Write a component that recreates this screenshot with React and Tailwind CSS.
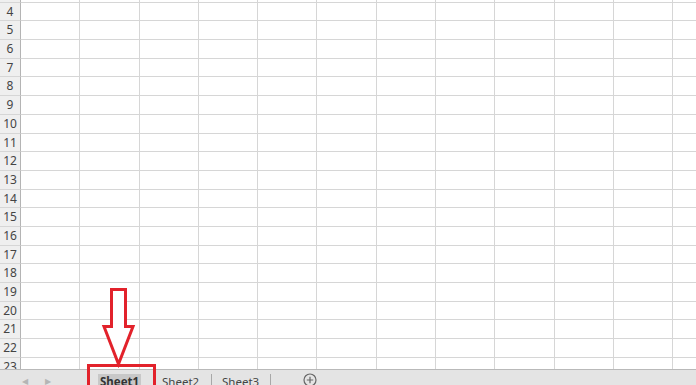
import React from "react";

const rows = Array.from({ length: 21 }, (_, i) => i + 3);
const cols = Array.from({ length: 12 }, (_, i) => i);

const App = () => {
  return (
    <div className="relative w-[696px] h-[385px] overflow-hidden bg-white font-['Noto_Sans',sans-serif]">
      {/* Grid */}
      <div className="h-[370px] overflow-hidden border-b border-[#b9b9b9]">
        <div className="mt-[-16px]">
          {rows.map((r) => (
            <div key={r} className="flex h-[18.7px]">
              <div className="w-[21px] shrink-0 bg-[#efefef] border-r border-b border-r-[#b4b4b4] border-b-[#d6d6d6] text-[12px] leading-[18px] text-[#444] text-center">
                {r}
              </div>
              {cols.map((c) => (
                <div
                  key={c}
                  className="w-[59.3px] shrink-0 border-r border-b border-[#d6d6d6]"
                />
              ))}
            </div>
          ))}
        </div>
      </div>

      {/* Sheet tabs */}
      <div className="h-[15px] bg-[#e4e4e4] flex items-start text-[11.5px] leading-[14px] text-[#444]">
        <div className="w-[87px] flex items-center pt-[4px]">
          <span className="ml-[22px] text-[8px] text-[#b5b5b5]">◀</span>
          <span className="ml-[17px] text-[8px] text-[#b5b5b5]">▶</span>
        </div>
        <div className="w-[69px] pt-[5px] pl-[11px]">
          <span className="bg-[#c8c8c8] px-[2px] font-bold text-[#333]">Sheet1</span>
        </div>
        <div className="w-[55px] pt-[5px] pl-[6px]">Sheet2</div>
        <div className="w-px h-[11px] mt-[4px] bg-[#a8a8a8]" />
        <div className="w-[58px] pt-[5px] pl-[10px]">Sheet3</div>
        <div className="w-px h-[11px] mt-[4px] bg-[#a8a8a8]" />
        <div className="ml-[32px] pt-[3px]">
          <svg width="14" height="14" viewBox="0 0 14 14">
            <circle cx="7" cy="7" r="6" fill="none" stroke="#666" strokeWidth="1.2" />
            <path d="M7 3.8v6.4M3.8 7h6.4" stroke="#666" strokeWidth="1.2" />
          </svg>
        </div>
      </div>

      {/* Red annotation */}
      <svg
        className="absolute left-0 top-0 pointer-events-none"
        width="696"
        height="385"
        viewBox="0 0 696 385"
      >
        <path
          d="M111.5 289.5 H125.5 V326.5 H133 L118.5 364 L104 326.5 H111.5 Z"
          fill="white"
          stroke="#e2222b"
          strokeWidth="3"
          strokeLinejoin="miter"
        />
        <rect x="88.5" y="365.5" width="66" height="24" fill="none" stroke="#e2222b" strokeWidth="3" />
      </svg>
    </div>
  );
};

export default App;
